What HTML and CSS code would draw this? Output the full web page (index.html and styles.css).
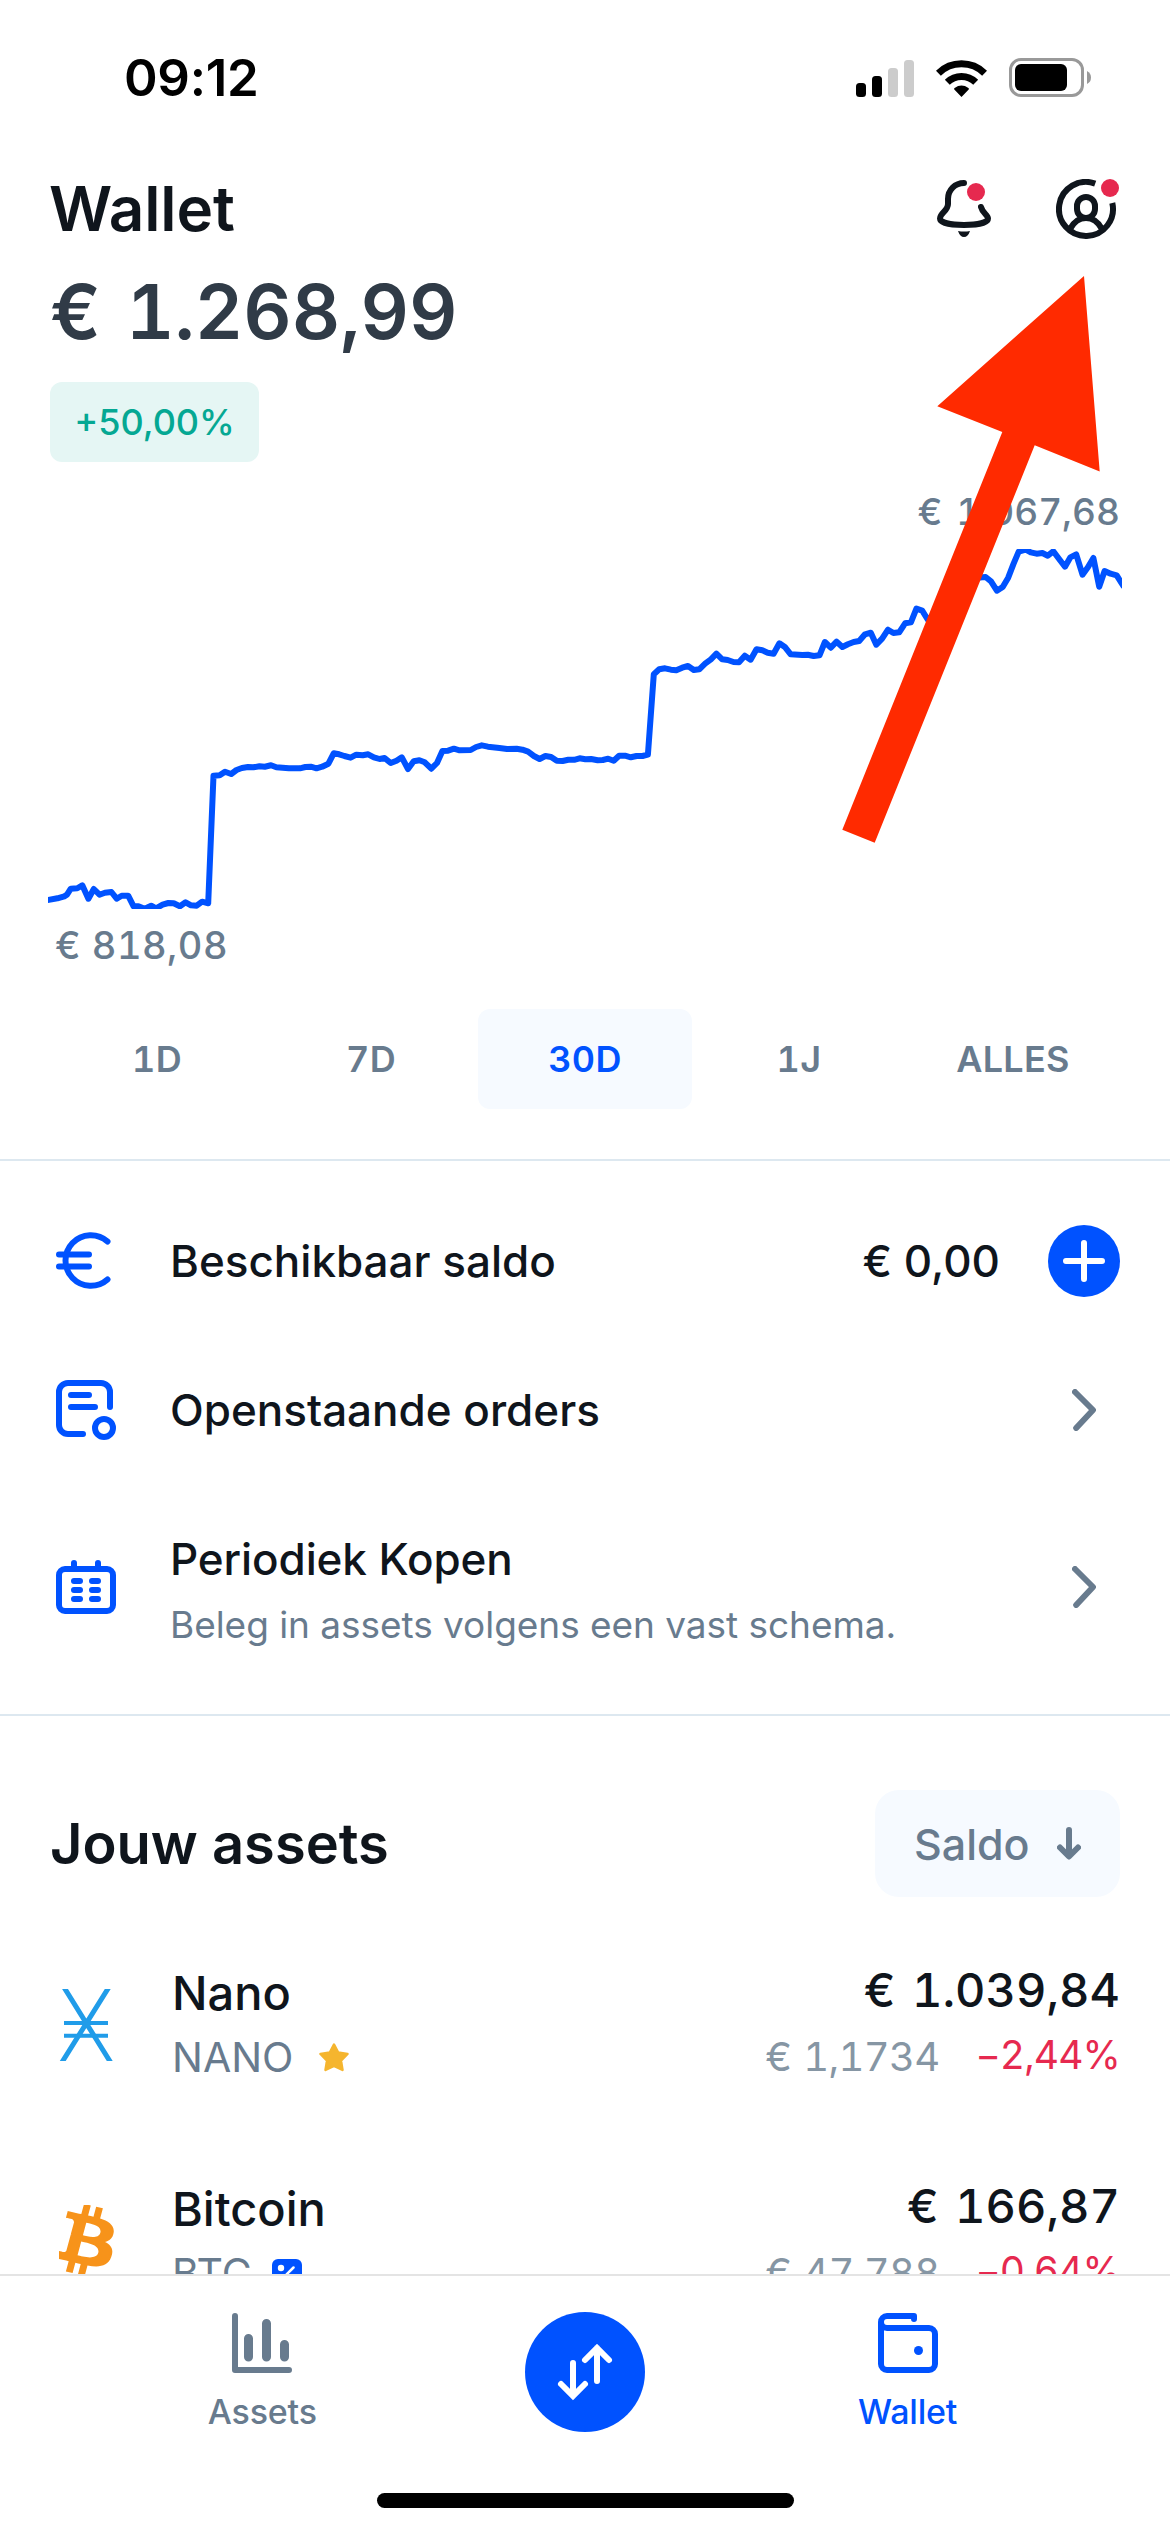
FILE: index.html
```html
<!DOCTYPE html>
<html lang="nl">
<head>
<meta charset="utf-8">
<title>Wallet</title>
<link rel="stylesheet" href="styles.css">
</head>
<body>
<div class="screen">
  <main class="content">
    <div class="status-bar">
      <span class="time">09:12</span>
      <div class="status-icons">
        <svg class="signal" width="58" height="38" viewBox="0 0 58 38"><g fill="#000"><rect y="24" width="10" height="14" rx="3.5"/><rect x="16" y="17" width="10" height="21" rx="3.5"/></g><g fill="#ccc"><rect x="32" y="9" width="10" height="29" rx="3.5"/><rect x="48" y="1" width="10" height="37" rx="3.5"/></g></svg>
        <svg class="wifi" width="51" height="38" viewBox="0 0 51 38"><g fill="none" stroke="#000" stroke-width="7"><path d="M2.4 14.2A33 33 0 0 1 48.6 14.2"/><path d="M11.3 23.2A20.3 20.3 0 0 1 39.7 23.2"/></g><path d="M25.5 38L18.3 30.5Q17.6 29.6 18.6 28.9Q25.5 24 32.4 28.9Q33.4 29.6 32.7 30.5Z"/></svg>
        <svg class="battery" width="82" height="39" viewBox="0 0 82 39"><rect x="1.5" y="1.5" width="72" height="36" rx="10.5" fill="none" stroke="#999" stroke-width="3"/><rect x="6" y="6" width="52" height="27" rx="6"/><path d="M78 13Q82 15 82 19.500Q82 24 78 26Z" fill="#999"/></svg>
      </div>
    </div>
    <header class="header">
      <h1 class="title">Wallet</h1>
      <div class="header-actions">
        <svg width="56" height="60" viewBox="0 0 56 60"><path d="M28 4C19 4 12 11 12 20V25C12 32 4 34 4 39.500C4 43.500 14 46 28 46S52 43.500 52 39.500C52 36 46.500 34 45 28" fill="none" stroke="#0f151c" stroke-width="6" stroke-linecap="round"/><path d="M22 52Q28 53 34 52Q32 58 28 58T22 52Z" fill="#0f151c"/><circle cx="40" cy="13" r="9" fill="#e6294f"/></svg>
        <svg width="64" height="60" viewBox="0 0 64 60"><g fill="none" stroke="#0f151c" stroke-width="6"><path d="M39.200 4.600A27 27 0 1 0 56.300 24"/><rect x="21" y="18" width="18" height="21" rx="9"/><path d="M14 50Q20 39 30 39T46 50"/></g><circle cx="54" cy="9" r="9" fill="#e6294f"/></svg>
      </div>
    </header>
    <div class="balance">€ 1.268,99</div>
    <div class="change">+50,00%</div>

    <section class="chart">
      <div class="chart-max">€ 1.067,68</div>
      <svg class="chart-line" width="1074" height="360" viewBox="48 549 1074 360"><polyline fill="none" stroke="#0052ff" stroke-width="6" stroke-linejoin="round" points="46,900.4 57.4,898.3 64.3,896.3 67,894.7 70.8,888.7 77.3,888.3 82.3,885.3 88.4,898.7 93.8,889 99.5,894.7 104.9,892.7 111.4,892 116.7,898.7 121.7,895.7 128.2,895.7 133.6,906.3 138.5,906.3 144.7,908.7 151.2,905.7 156.1,908.3 162.6,904.7 168.4,903 173.7,903.3 179.9,906.3 185.6,902.3 191,905.3 196.7,905.7 202.1,901.7 208.2,903.3 213.5,775.7 219.7,775.3 225,771.7 231.2,774 236.5,770 241.9,768 248,767 253.3,767.3 259.5,766.3 264.8,766.7 271,765.3 276.3,767.3 288.9,768.3 300,768.3 305.4,767 310.8,766.7 316.5,768.3 322.2,766.7 328.4,763.7 333.7,753.3 339.1,754.3 344.4,756 350.6,757.7 356.3,754.7 362.8,755.3 368.2,754.3 373.9,757.3 379.6,759 384.6,758 390.7,763 396.5,760.7 401.8,757.3 408,769 413.7,761.3 419.4,760.3 424.8,762.3 431.3,768.7 437,763 442.4,751 448.1,750.7 453.9,748.7 459.6,750.3 470.7,750 476.1,747 481.8,745.3 487.9,746.7 499.4,748 507,749 516.6,748.7 522.4,749.7 528.1,751.7 533.9,756 539.6,759 545.4,756 551.1,757 556.8,760.7 562.6,761 568.3,759.8 574.2,759.8 579.6,758.3 585.4,759.3 591.1,759 597.7,760.3 602.8,760 608.2,758.7 613.7,760.7 619.1,755.7 625,755.7 630.8,757.3 636.6,756 642.5,756 647.9,754.7 653.8,674.3 659.2,669.3 665,668.3 670.9,669.7 676.3,670.3 682.2,667.7 688,666 693.8,670 699.3,669.3 705.1,663.7 710.9,659.3 716.4,653.7 722.2,659.3 727.7,660 733.5,662 739,662.3 744.8,655.7 750.6,659.7 756.5,649.3 762.3,650.3 767.7,652.7 773.6,653.7 779.4,643.3 785.2,647.3 790.7,654.3 802.4,655 807.8,654.7 813.7,656 819.5,655.3 824.9,642 830.8,647.7 836.6,641.7 842.4,647 847.9,644.3 853.7,642 859.2,641 865,634.3 870.8,632.7 876.3,644.7 882.1,638.7 888,629.7 893.4,633 899.2,632.3 905.1,623.3 910.9,622.3 916.4,608.7 922.2,610.7 928,620 940,608 952,598 964,588 974,578 985.6,577 991,581.3 996.9,590.7 1002.7,587 1008.2,577.7 1013.6,563.7 1018.7,551.7 1025.7,549.7 1030.7,552.3 1036.6,553.7 1042.4,553 1047.8,555.7 1053.3,551.3 1059.1,559 1065,566.7 1070.4,557.3 1076.2,554.3 1082.5,574.7 1087.9,567.3 1093.4,558 1099.2,586.7 1104.6,571 1110.5,573.7 1116.7,575.3 1124,587"/></svg>
      <div class="chart-min">€ 818,08</div>
    </section>

    <nav class="periods">
      <span class="period">1D</span>
      <span class="period">7D</span>
      <span class="period period-active">30D</span>
      <span class="period">1J</span>
      <span class="period">ALLES</span>
    </nav>

    <section class="menu">
      <div class="menu-row">
        <svg width="60" height="59" viewBox="0 0 60 59"><path d="M51.500 10.500A25.300 25.300 0 1 0 51.500 48.500M3 23.500H33M3 35.500H33" fill="none" stroke="#0052ff" stroke-width="6" stroke-linecap="round"/></svg>
        <div class="menu-title">Beschikbaar saldo</div>
        <span class="menu-value">€ 0,00</span>
        <svg class="plus" width="72" height="72" viewBox="0 0 72 72"><circle cx="36" cy="36" r="36" fill="#0052ff"/><path d="M36 18V54M18 36H54" stroke="#fff" stroke-width="6" stroke-linecap="round"/></svg>
      </div>
      <div class="menu-row">
        <svg width="60" height="60" viewBox="0 0 60 60"><g fill="none" stroke="#0052ff" stroke-width="6" stroke-linecap="round"><path d="M54 27V12A9 9 0 0 0 45 3H12A9 9 0 0 0 3 12V45A9 9 0 0 0 12 54H27M15 15H33M15 27H39"/><circle cx="48" cy="48" r="9"/></g></svg>
        <div class="menu-title">Openstaande orders</div>
        <svg class="chevron" width="24" height="42" viewBox="0 0 24 42"><path d="M3 3L21 21L4.200 39" fill="none" stroke="#687b8e" stroke-width="6" stroke-linecap="round" stroke-linejoin="round"/></svg>
      </div>
      <div class="menu-row menu-row-tall">
        <svg width="60" height="54" viewBox="0 0 60 54"><g fill="none" stroke="#0052ff" stroke-width="6" stroke-linecap="round"><rect x="3" y="9" width="54" height="42" rx="6"/><path d="M18 3V8M42 3V8M18 21H24M36 21H42M18 30H24M36 30H42M18 39H24M36 39H42"/></g></svg>
        <div class="menu-text">
          <div class="menu-title">Periodiek Kopen</div>
          <div class="menu-note">Beleg in assets volgens een vast schema.</div>
        </div>
        <svg class="chevron" width="24" height="42" viewBox="0 0 24 42"><path d="M3 3L21 21L4.200 39" fill="none" stroke="#687b8e" stroke-width="6" stroke-linecap="round" stroke-linejoin="round"/></svg>
      </div>
    </section>

    <section class="assets">
      <div class="assets-head">
        <h2 class="assets-title">Jouw assets</h2>
        <div class="sort">Saldo
          <svg width="24" height="33" viewBox="0 0 24 33"><path d="M12 3V29M3 20.500L12 29.500L21 20.500" fill="none" stroke="#687b8e" stroke-width="6" stroke-linecap="round" stroke-linejoin="round"/></svg>
        </div>
      </div>
      <div class="asset">
        <svg width="55" height="72" viewBox="0 0 55 72"><path d="M4.800 -2L52 74M50 -2L2.500 74" stroke="#209ce9" stroke-width="5"/><path d="M5 34H49M5 46.700H49" stroke="#209ce9" stroke-width="4"/></svg>
        <div class="asset-name">
          <div class="name">Nano</div>
          <div class="ticker">NANO
            <svg width="30" height="29" viewBox="0 0 30 29"><path d="M15 1.500L19.200 9.600L28.500 11L22 17.700L23.500 27L15 22.800L6.500 27L8 17.700L1.500 11L10.800 9.600Z" fill="#f5b52e" stroke="#f5b52e" stroke-width="2.500" stroke-linejoin="round"/></svg>
          </div>
        </div>
        <div class="asset-value">
          <div class="amount">€ 1.039,84</div>
          <div class="quote"><span class="price">€ 1,1734</span><span class="loss">−2,44%</span></div>
        </div>
      </div>
      <div class="asset">
        <svg width="55" height="72" viewBox="17.600 11.800 28.700 40.500" preserveAspectRatio="none"><path fill="#f7931a" d="M46.103,27.444c0.637-4.258-2.605-6.547-7.038-8.074l1.438-5.768-3.511-0.875-1.4,5.616c-0.923-0.230-1.871-0.447-2.813-0.662l1.410-5.653-3.509-0.875-1.439,5.766c-0.764-0.174-1.514-0.346-2.242-0.527l0.004-0.018-4.842-1.209-0.934,3.750s2.605,0.597,2.550,0.634c1.422,0.355,1.679,1.296,1.636,2.042l-1.638,6.571c0.098,0.025,0.225,0.061,0.365,0.117-0.117-0.029-0.242-0.061-0.371-0.092l-2.296,9.205c-0.174,0.432-0.615,1.080-1.609,0.834,0.035,0.051-2.552-0.637-2.552-0.637l-1.743,4.019,4.569,1.139c0.850,0.213,1.683,0.436,2.503,0.646l-1.453,5.834,3.507,0.875,1.439-5.772c0.958,0.260,1.888,0.500,2.798,0.726l-1.434,5.745,3.511,0.875,1.453-5.823c5.987,1.133,10.489,0.676,12.384-4.739,1.527-4.360-0.076-6.875-3.226-8.515,2.294-0.529,4.022-2.038,4.483-5.155zm-8.022,11.249c-1.085,4.360-8.426,2.003-10.806,1.412l1.928-7.729c2.380,0.594,10.012,1.770,8.878,6.317zm1.086-11.312c-0.990,3.966-7.100,1.951-9.082,1.457l1.748-7.010c1.982,0.494,8.365,1.416,7.334,5.553z"/></svg>
        <div class="asset-name">
          <div class="name">Bitcoin</div>
          <div class="ticker ticker-btc">BTC
            <svg width="30" height="30" viewBox="0 0 30 30"><rect width="30" height="30" rx="6" fill="#0052ff"/><circle cx="9" cy="9" r="3.200" fill="#fff"/><circle cx="21" cy="21" r="3.200" fill="#fff"/><path d="M21.500 8.500L8.500 21.500" stroke="#fff" stroke-width="2.500" stroke-linecap="round"/></svg>
          </div>
        </div>
        <div class="asset-value">
          <div class="amount">€ 166,87</div>
          <div class="quote"><span class="price">€ 47.788</span><span class="loss">−0,64%</span></div>
        </div>
      </div>
    </section>
  </main>

  <nav class="tab-bar">
    <div class="tabs">
      <div class="tab">
        <svg width="60" height="60" viewBox="0 0 60 60"><path d="M3 3V57H57" fill="none" stroke="#687b8e" stroke-width="6" stroke-linecap="round" stroke-linejoin="round"/><path d="M16.500 25.500V44M34.500 10.500V44M52.500 31.500V44" stroke="#687b8e" stroke-width="9" stroke-linecap="round"/></svg>
        <span class="tab-label">Assets</span>
      </div>
      <svg class="trade" width="120" height="120" viewBox="0 0 120 120"><circle cx="60" cy="60" r="60" fill="#0052ff"/><path d="M48 51V83M36 72L48 84L60 72M72 69V36M60 48L72 36L84 48" fill="none" stroke="#fff" stroke-width="6" stroke-linecap="round"/></svg>
      <div class="tab tab-active">
        <svg width="60" height="60" viewBox="0 0 60 60"><path d="M36 6V3H9A6 6 0 0 0 3 9V51A6 6 0 0 0 9 57H51A6 6 0 0 0 57 51V21A6 6 0 0 0 51 15H9A6 6 0 0 1 3 9" fill="none" stroke="#0052ff" stroke-width="6" stroke-linecap="round" stroke-linejoin="round"/><circle cx="40.500" cy="37.500" r="4.500" fill="#0052ff"/></svg>
        <span class="tab-label">Wallet</span>
      </div>
    </div>
    <div class="home-bar"></div>
  </nav>

  <svg class="pointer" width="258" height="568" viewBox="842 276 258 568"><path d="M1084 276L937.300 406.200L1002.300 431.900L842.300 829.700L874.700 842.700L1034.700 445.300L1099.700 471.400Z" fill="#ff2a00"/></svg>
</div>
</body>
</html>
```
FILE: styles.css
```css
* { box-sizing: border-box; margin: 0; padding: 0; }
svg { display: block; flex: none; }
body { background: #fff; color: #0f151c; font-family: Inter, "Liberation Sans", sans-serif; }

.screen { position: relative; width: 1170px; height: 2532px; display: flex; flex-direction: column; overflow: hidden; white-space: nowrap; }
.content { height: 2274px; overflow: hidden; }

.status-bar { height: 155px; padding: 0 79px 0 124px; display: flex; align-items: center; justify-content: space-between; color: #000; }
.time { font-size: 51px; font-weight: 600; letter-spacing: -0.3px; }
.status-icons { display: flex; align-items: center; }
.wifi { margin: 0 22px; }

.header { height: 107px; padding: 0 50px 0 49px; display: flex; align-items: center; justify-content: space-between; }
.title { font-size: 62px; font-weight: 600; letter-spacing: -0.1px; }
.header-actions { display: flex; gap: 64px; }

.balance { padding-left: 50px; font-size: 75px; font-weight: 600; line-height: 99px; word-spacing: 5px; color: #303b47; font-variant-numeric: tabular-nums; }
.change { width: 209px; height: 80px; margin: 21px 0 0 50px; border-radius: 12px; background: #e5f6f4; color: #05a893; font-size: 36px; font-weight: 500; line-height: 80px; text-align: center; }

.chart { margin-top: 12px; padding: 0 48px; color: #687b8e; font-size: 38px; font-weight: 500; font-variant-numeric: tabular-nums; letter-spacing: 0.5px; }
.chart-max { padding-right: 2px; font-size: 37px; line-height: 75px; letter-spacing: 0; word-spacing: 4px; text-align: right; }
.chart-min { padding-left: 7px; line-height: 72px; }

.periods { height: 100px; margin: 28px 50px 50px; display: grid; grid-template-columns: repeat(5, 1fr); }
.period { border-radius: 12px; color: #687b8e; font-size: 36px; font-weight: 600; line-height: 100px; letter-spacing: 0.3px; text-align: center; font-variant-numeric: tabular-nums; }
.period-active { background: #f6faff; color: #0052ff; }

.menu { height: 557px; padding: 25px 50px 0 56px; border-top: 2px solid #dde8f0; border-bottom: 2px solid #dde8f0; font-size: 44px; font-weight: 500; }
.menu-row { height: 149px; display: flex; align-items: center; }
.menu-row-tall { height: 205px; }
.menu-title { margin-left: 54px; }
.menu-text .menu-title { line-height: 76px; letter-spacing: -0.1px; }
.menu-note { margin-left: 54px; color: #687b8e; font-size: 37px; font-weight: 400; line-height: 56px; letter-spacing: -0.04px; }
.menu-value { margin-left: auto; }
.plus { margin-left: 48px; }
.chevron { margin: 0 24px 0 auto; }

.assets { padding: 74px 50px 0; }
.assets-head { height: 107px; margin-bottom: 20px; display: flex; align-items: center; justify-content: space-between; }
.assets-title { font-size: 56px; font-weight: 600; }
.sort { width: 245px; height: 107px; padding-left: 39px; display: flex; align-items: center; gap: 27px; border-radius: 24px; background: #f6faff; color: #687b8e; font-size: 43px; font-weight: 500; }

.asset { height: 216px; padding-left: 9px; display: flex; align-items: center; }
.asset-name { margin-left: 58px; line-height: 65px; }
.name { font-size: 47px; font-weight: 500; }
.ticker { display: flex; align-items: center; gap: 26px; color: #687b8e; font-size: 41px; }
.ticker-btc { gap: 20px; }
.asset-value { margin-left: auto; text-align: right; font-variant-numeric: tabular-nums; }
.amount { font-size: 47px; font-weight: 500; line-height: 64px; word-spacing: 4px; }
.quote { display: flex; justify-content: flex-end; gap: 36px; font-size: 40px; line-height: 70px; }
.price { color: #8696a4; letter-spacing: -0.7px; word-spacing: 2px; }
.loss { color: #e6294f; font-size: 39px; line-height: 66px; letter-spacing: -0.9px; }

.tab-bar { height: 258px; border-top: 2px solid #e4e4e4; background: #fff; }
.tabs { height: 217px; padding: 0 101px; display: grid; grid-template-columns: repeat(3, 1fr); justify-items: center; }
.tab { padding-top: 37px; display: flex; flex-direction: column; align-items: center; color: #687b8e; }
.tab-active { color: #0052ff; }
.tab-label { margin-top: 14px; font-size: 34px; font-weight: 500; line-height: 50px; letter-spacing: -0.2px; }
.trade { margin-top: 36px; }
.home-bar { width: 417px; height: 15px; margin: 0 auto; border-radius: 8px; background: #000; }

.pointer { position: absolute; left: 842px; top: 276px; }
```
